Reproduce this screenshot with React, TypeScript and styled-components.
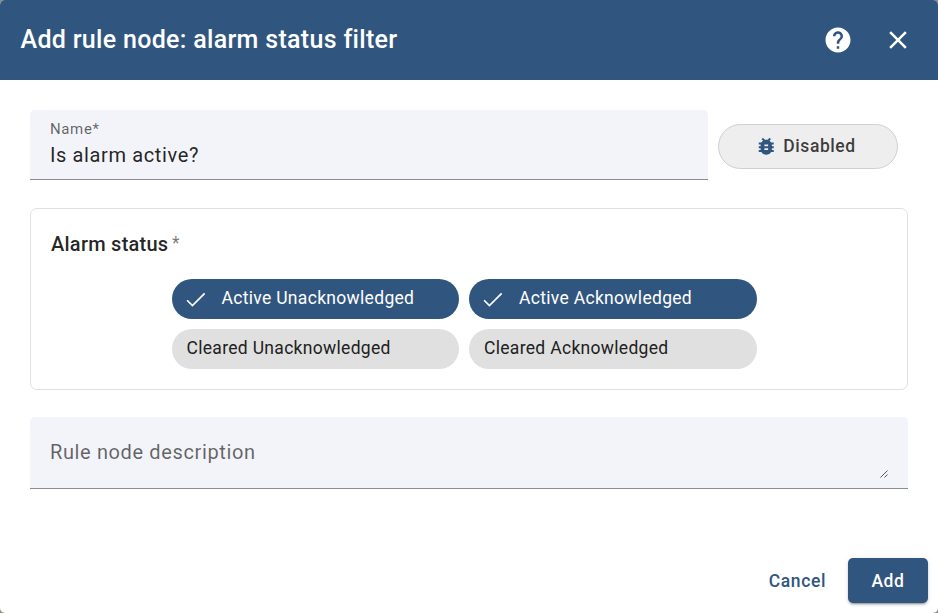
import React from 'react';
import styled, { createGlobalStyle, css } from 'styled-components';
import { MdBugReport, MdClose, MdHelp } from 'react-icons/md';

const primary = '#305680';

const GlobalStyle = createGlobalStyle`
  *, *::before, *::after { box-sizing: border-box; }
  html, body { margin: 0; height: 100%; }
  body {
    background: #8b8c84;
    font-family: Roboto, "Liberation Sans", sans-serif;
    color: rgba(0, 0, 0, 0.87);
    overflow: hidden;
  }
  #root { height: 100%; }
  button { font-family: inherit; cursor: pointer; }
`;

const Dialog = styled.section`
  display: flex;
  flex-direction: column;
  width: 938px;
  height: 613px;
  background: #fff;
  border-radius: 5px;
  overflow: hidden;
`;

const Toolbar = styled.header`
  display: flex;
  align-items: center;
  height: 80px;
  padding: 0 10px 0 20.5px;
  background: ${primary};
  color: #fff;
`;

const Title = styled.h2`
  flex: 1;
  margin: 0;
  font-size: 25px;
  font-weight: 500;
  line-height: 40px;
  letter-spacing: 0.31px;
`;

const IconButton = styled.button`
  display: grid;
  place-items: center;
  width: 60px;
  height: 60px;
  padding: 0;
  border: 0;
  background: none;
  color: inherit;
  font-size: 30px;
`;

const Content = styled.main`
  flex: 1;
  display: flex;
  flex-direction: column;
  padding: 30px 30px 0;
`;

const NameRow = styled.div`
  display: flex;
  align-items: flex-start;
  gap: 10px;
  padding-right: 10px;
`;

const Field = styled.div`
  flex: 1;
  display: flex;
  flex-direction: column;
  height: 70px;
  padding: 10px 20px 0;
  background: #f3f4f9;
  border-bottom: 1px solid #8b8d90;
  border-radius: 5px 5px 0 0;
`;

const FieldLabel = styled.label`
  font-size: 15px;
  line-height: 18px;
  letter-spacing: 0.625px;
  color: rgba(0, 0, 0, 0.6);
`;

const FieldValue = styled.div`
  padding-top: 2px;
  font-size: 20px;
  line-height: 30px;
  letter-spacing: 0.625px;
`;

const DebugButton = styled.button`
  display: flex;
  align-items: center;
  justify-content: center;
  gap: 6px;
  width: 180px;
  height: 45px;
  margin-top: 14px;
  padding: 0 5.5px 1px 0;
  border: 1px solid #cfcfcf;
  border-radius: 23px;
  background: #eee;
  color: rgba(0, 0, 0, 0.76);
  font-size: 17.5px;
  font-weight: 500;
  letter-spacing: 0.55px;

  svg { color: ${primary}; font-size: 22.5px; }
`;

const StatusPanel = styled.fieldset`
  display: flex;
  flex-direction: column;
  gap: 20px;
  height: 182px;
  margin: 28px 0 27px;
  padding: 20px;
  border: 1px solid #e0e0e0;
  border-radius: 7px;
`;

const PanelTitle = styled.div`
  display: flex;
  height: 30px;
  font-size: 20px;
  font-weight: 500;
  line-height: 30px;
  letter-spacing: 0.25px;
`;

const Required = styled.span`
  margin-left: 3.5px;
  font-size: 17.5px;
  font-weight: 400;
  line-height: 29px;
  color: rgba(0, 0, 0, 0.54);
`;

const ChipGrid = styled.div`
  display: grid;
  grid-template-columns: repeat(2, 287.5px);
  gap: 10px;
  justify-content: center;
  padding-right: 10px;
`;

const Chip = styled.button<{ $selected: boolean }>`
  display: flex;
  align-items: center;
  height: 40px;
  padding: 0 15px;
  border: 0;
  border-radius: 20px;
  background: #e0e0e0;
  color: #212121;
  font-size: 17.5px;
  letter-spacing: 0.31px;
  ${({ $selected }) =>
    $selected &&
    css`
      background: ${primary};
      color: #fff;
      padding-left: 12px;
    `}
`;

const ChipText = styled.span`
  padding-bottom: 2px;
  line-height: 25px;
`;

const Check = styled.svg`
  width: 25px;
  height: 25px;
  margin-right: 13px;
  fill: none;
  stroke: currentColor;
  stroke-width: 2;
`;

const DescriptionField = styled(Field)`
  flex: none;
  flex-direction: row;
  justify-content: space-between;
  height: 72px;
  padding: 20px 20px 10px;
`;

const Placeholder = styled.span`
  font-size: 20px;
  line-height: 30px;
  letter-spacing: 0.625px;
  color: rgba(0, 0, 0, 0.6);
`;

const ResizeGrip = styled.svg`
  align-self: flex-end;
  width: 8px;
  height: 8px;
  stroke: #555;
  stroke-width: 1;
`;

const Actions = styled.footer`
  display: flex;
  justify-content: flex-end;
  gap: 10px;
  padding: 10px;
`;

const ActionButton = styled.button<{ $raised?: boolean }>`
  height: 45px;
  padding: 0 12px;
  border: 0;
  border-radius: 5px;
  background: none;
  color: ${primary};
  font-size: 17.5px;
  font-weight: 500;
  letter-spacing: 0.625px;
  ${({ $raised }) =>
    $raised &&
    css`
      width: 80px;
      background: ${primary};
      color: #fff;
      box-shadow: 0 3px 1px -2px rgba(0, 0, 0, 0.2), 0 2px 2px rgba(0, 0, 0, 0.14),
        0 1px 5px rgba(0, 0, 0, 0.12);
    `}
`;

const statuses = [
  { label: 'Active Unacknowledged', selected: true },
  { label: 'Active Acknowledged', selected: true },
  { label: 'Cleared Unacknowledged', selected: false },
  { label: 'Cleared Acknowledged', selected: false },
];

export default function App() {
  return (
    <>
      <GlobalStyle />
      <Dialog role="dialog">
        <Toolbar>
          <Title>Add rule node: alarm status filter</Title>
          <IconButton aria-label="Help"><MdHelp /></IconButton>
          <IconButton aria-label="Close"><MdClose /></IconButton>
        </Toolbar>
        <Content>
          <NameRow>
            <Field>
              <FieldLabel>Name*</FieldLabel>
              <FieldValue>Is alarm active?</FieldValue>
            </Field>
            <DebugButton>
              <MdBugReport />
              Disabled
            </DebugButton>
          </NameRow>
          <StatusPanel>
            <PanelTitle>
              Alarm status<Required>*</Required>
            </PanelTitle>
            <ChipGrid>
              {statuses.map(({ label, selected }) => (
                <Chip key={label} $selected={selected} aria-pressed={selected}>
                  {selected && (
                    <Check viewBox="-2 -3 30 30">
                      <path d="M1.73,12.91 8.1,19.28 22.79,4.59" />
                    </Check>
                  )}
                  <ChipText>{label}</ChipText>
                </Chip>
              ))}
            </ChipGrid>
          </StatusPanel>
          <DescriptionField>
            <Placeholder>Rule node description</Placeholder>
            <ResizeGrip viewBox="0 0 8 8">
              <path d="M0.5 7.5 7.5 0.5M4.5 7.5 7.5 4.5" />
            </ResizeGrip>
          </DescriptionField>
        </Content>
        <Actions>
          <ActionButton>Cancel</ActionButton>
          <ActionButton $raised>Add</ActionButton>
        </Actions>
      </Dialog>
    </>
  );
}
